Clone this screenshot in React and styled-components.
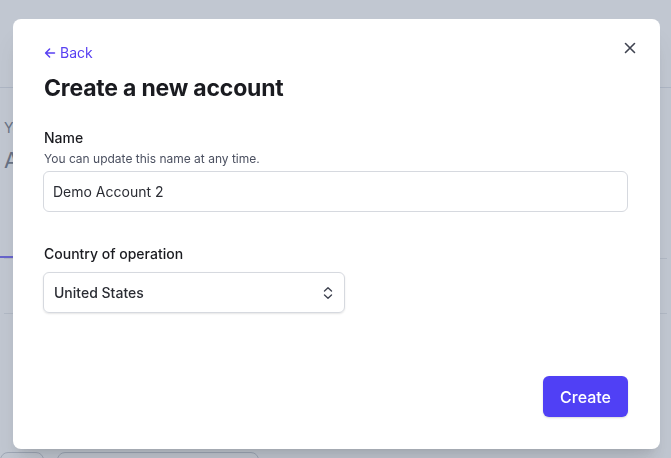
import React from 'react'
import styled, { createGlobalStyle } from 'styled-components'

const GlobalStyle = createGlobalStyle`
  html, body {
    margin: 0;
    padding: 0;
    background: #ffffff;
    font-family: Inter, "Noto Sans", sans-serif;
    -webkit-font-smoothing: antialiased;
  }
  * { box-sizing: border-box; }
`

function App() {
  return (
    <>
      <GlobalStyle />
      <Page>
        <TopBar />
        <PageBody>
          <Eyebrow>Your accounts</Eyebrow>
          <PageTitle>Accounts</PageTitle>
          <Tabs>
            <Tab active>All</Tab>
          </Tabs>
          <Divider />
          <BottomRow>
            <Chip width={44} />
            <Chip width={202} />
          </BottomRow>
        </PageBody>
      </Page>

      <Overlay>
        <Modal>
          <CloseButton aria-label="Close">
            <svg width="12" height="12" viewBox="0 0 12 12" fill="none">
              <path d="M1.5 1.5l9 9M10.5 1.5l-9 9" stroke="#3f4350" strokeWidth="1.6" strokeLinecap="round" />
            </svg>
          </CloseButton>
          <BackLink>
            <svg width="12" height="12" viewBox="0 0 12 12" fill="none">
              <path d="M10.5 6H1.8M5.6 2L1.6 6l4 4" stroke="currentColor" strokeWidth="1.5" strokeLinecap="round" strokeLinejoin="round" />
            </svg>
            Back
          </BackLink>
          <Title>Create a new account</Title>

          <Field>
            <Label>Name</Label>
            <Hint>You can update this name at any time.</Hint>
            <Input defaultValue="Demo Account 2" />
          </Field>

          <Field spaced>
            <Label>Country of operation</Label>
            <Select>
              <span>United States</span>
              <svg width="12" height="14" viewBox="0 0 12 14" fill="none">
                <path d="M2.5 5L6 1.8 9.5 5M2.5 9L6 12.2 9.5 9" stroke="#3f4350" strokeWidth="1.4" strokeLinecap="round" strokeLinejoin="round" />
              </svg>
            </Select>
          </Field>

          <Footer>
            <PrimaryButton>Create</PrimaryButton>
          </Footer>
        </Modal>
      </Overlay>
    </>
  )
}

export default App

const Page = styled.div`
  height: 458px;
  overflow: hidden;
  display: flex;
  flex-direction: column;
`
const TopBar = styled.div`
  flex: none;
  height: 88px;
  border-bottom: 1px solid #dfe3ea;
`
const PageBody = styled.div`
  padding: 0 4px;
  display: flex;
  flex-direction: column;
`
const Eyebrow = styled.div`
  margin-top: 30px;
  font-size: 14px;
  line-height: 20px;
  color: #6b7280;
`
const PageTitle = styled.div`
  margin-top: 7px;
  font-size: 22px;
  line-height: 30px;
  color: #6b7280;
`
const Tabs = styled.div`
  margin-top: 56px;
  display: flex;
  border-bottom: 1px solid #e5e7eb;
`
const Tab = styled.div`
  padding: 0 16px 8px;
  margin-left: -4px;
  font-size: 14px;
  color: #4f3ff0;
  border-bottom: 2px solid ${p => (p.active ? '#6b5cf6' : 'transparent')};
  width: 160px;
`
const Divider = styled.div`
  margin-top: 54px;
  border-bottom: 1px solid #e5e7eb;
`
const BottomRow = styled.div`
  margin-top: 138px;
  display: flex;
  gap: 13px;
  margin-left: -4px;
`
const Chip = styled.div`
  flex: none;
  width: ${p => p.width}px;
  height: 30px;
  border: 1px solid #c7cbd3;
  border-radius: 8px;
`
const Overlay = styled.div`
  position: fixed;
  inset: 0;
  background: rgba(100, 116, 139, 0.4);
  display: flex;
  justify-content: flex-start;
  align-items: flex-start;
  padding: 19px 0 0 13px;
`
const Modal = styled.div`
  position: relative;
  width: 647px;
  height: 430px;
  background: #ffffff;
  border-radius: 8px;
  box-shadow: 0 20px 25px -5px rgba(0, 0, 0, 0.1), 0 8px 10px -6px rgba(0, 0, 0, 0.1);
  padding: 24px 32px 32px 30px;
  display: flex;
  flex-direction: column;
`
const CloseButton = styled.button`
  position: absolute;
  top: 19px;
  right: 20px;
  width: 20px;
  height: 20px;
  padding: 0;
  border: none;
  background: transparent;
  display: flex;
  align-items: center;
  justify-content: center;
  cursor: pointer;
`
const BackLink = styled.a`
  display: flex;
  align-items: center;
  gap: 4px;
  padding-left: 1px;
  font-size: 14px;
  line-height: 20px;
  color: #5840f2;
  cursor: pointer;
  align-self: flex-start;
`
const Title = styled.h1`
  margin: 9px 0 0 1px;
  font-size: 23px;
  line-height: 32px;
  font-weight: 700;
  color: #1a1b20;
  letter-spacing: -0.2px;
`
const Field = styled.div`
  display: flex;
  flex-direction: column;
  margin-top: ${p => (p.spaced ? '32px' : '24px')};
`
const Label = styled.label`
  padding-left: 1px;
  font-size: 14px;
  line-height: 20px;
  font-weight: 500;
  color: #1a1b20;
`
const Hint = styled.div`
  margin-top: 3px;
  padding-left: 1px;
  font-size: 12px;
  line-height: 16px;
  color: #4b5060;
`
const Input = styled.input`
  margin-top: 4px;
  height: 41px;
  width: 100%;
  padding: 0 9px;
  border: 1px solid #d6d9df;
  border-radius: 6px;
  font-family: inherit;
  font-size: 14px;
  color: #2a2c33;
  outline: none;
`
const Select = styled.div`
  margin-top: 8px;
  width: 302px;
  height: 41px;
  padding: 0 10px;
  border: 1px solid #d6d9df;
  border-radius: 6px;
  box-shadow: 0 1px 2px rgba(0, 0, 0, 0.1);
  display: flex;
  align-items: center;
  justify-content: space-between;
  font-size: 14px;
  font-weight: 500;
  color: #2a2c33;
`
const Footer = styled.div`
  margin-top: auto;
  display: flex;
  justify-content: flex-end;
`
const PrimaryButton = styled.button`
  height: 41px;
  padding: 0 17px;
  border: none;
  border-radius: 6px;
  background: #5040f5;
  box-shadow: 0 1px 2px rgba(0, 0, 0, 0.15);
  color: #ffffff;
  font-family: inherit;
  font-size: 16px;
  font-weight: 500;
  cursor: pointer;
`
